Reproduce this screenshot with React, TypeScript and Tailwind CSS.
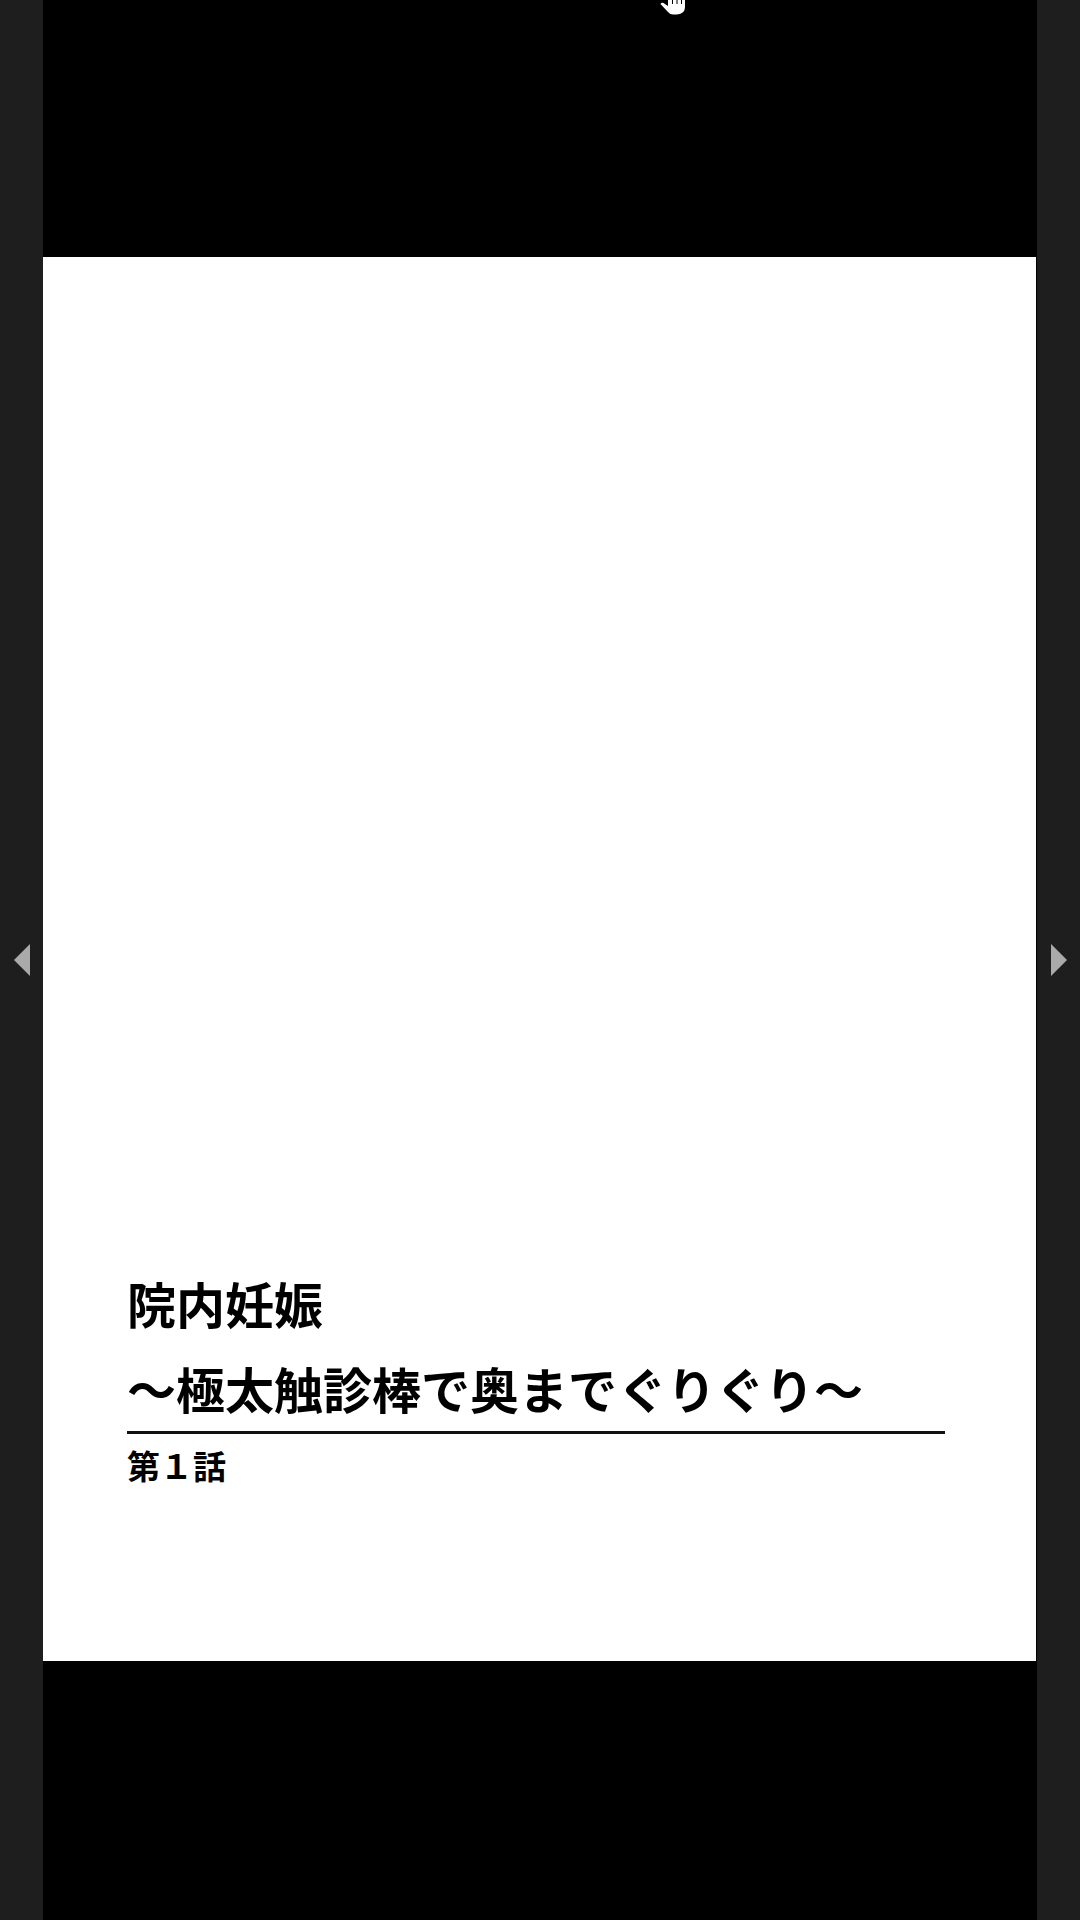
import React from "react";

const jp = "font-['Noto_Sans_CJK_JP','Noto_Sans',sans-serif]";

const SideBar = ({ direction }: { direction: "left" | "right" }) => (
  <div className="flex h-full w-[43px] shrink-0 items-center justify-center bg-[#1e1e1e]">
    <svg width="16" height="32" viewBox="0 0 16 32" aria-hidden="true">
      <path d={direction === "left" ? "M16 0V32L0 16Z" : "M0 0V32L16 16Z"} fill="#a9aaa9" />
    </svg>
  </div>
);

export default function App() {
  return (
    <div className={`relative flex h-[1920px] w-[1080px] overflow-hidden bg-black ${jp}`}>
      <SideBar direction="left" />
      <main className="flex h-full flex-1 flex-col">
        <div className="h-[257px] bg-black" />
        <section className="flex h-[1404px] flex-col bg-white pl-[84px] pr-[91px] pt-[1003px] text-black">
          <h1 className="text-[49px] font-bold leading-[85px]">
            <span className="block">院内妊娠</span>
            <span className="block whitespace-nowrap">～極太触診棒で奥までぐりぐり～</span>
          </h1>
          <div className="mt-[1px] h-[3px] bg-[#111]" />
          <p className="mt-[9px] text-[33px] font-bold leading-[44px]">第１話</p>
        </section>
        <div className="flex-1 bg-black" />
      </main>
      <div className="w-[1px] bg-black" />
      <SideBar direction="right" />
      {/* cursor, cut off by the top edge */}
      <svg className="absolute left-[660px] top-0" width="26" height="15" viewBox="0 0 26 15" aria-hidden="true">
        <path d="M0.5 4 Q1.5 2 3.5 3 L8 6 V0 H25 V7 Q25 14 17 14.5 H13 Q10 14.5 8 12 Z" fill="#fff" />
        <path d="M12.5 0V4M17 0V4M21.5 0V4" stroke="#000" strokeWidth="1" />
      </svg>
    </div>
  );
}
